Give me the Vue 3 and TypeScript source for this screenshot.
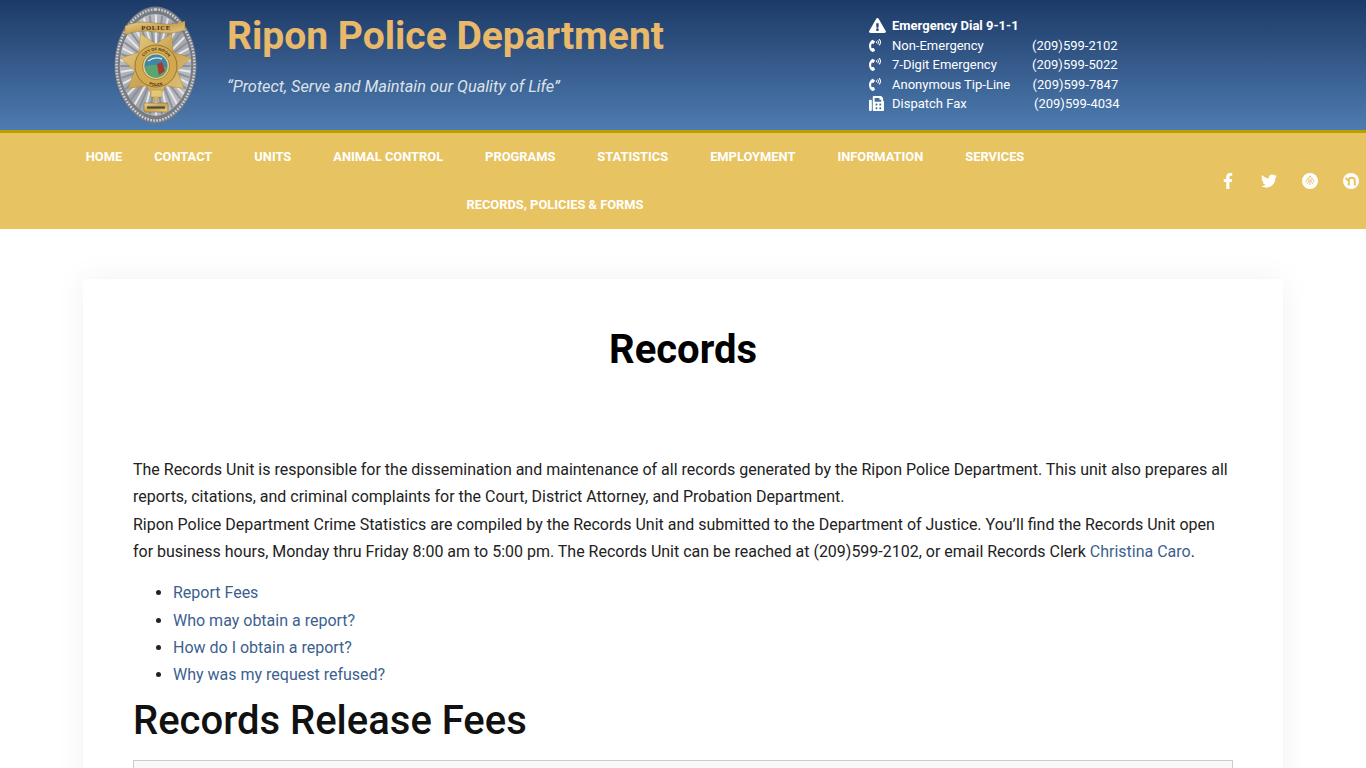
<script setup lang="ts">
const phone = 'M97.333 506.966c-129.874-129.874-129.681-340.252 0-469.933 5.698-5.698 14.527-6.632 21.263-2.422l64.817 40.513a17.187 17.187 0 0 1 6.849 20.958l-32.408 81.021a17.188 17.188 0 0 1-17.669 10.719l-55.81-5.58c-21.051 58.261-20.612 122.471 0 179.515l55.811-5.581a17.188 17.188 0 0 1 17.669 10.719l32.408 81.022a17.188 17.188 0 0 1-6.849 20.958l-64.817 40.513a17.19 17.19 0 0 1-21.264-2.422zM247.126 95.473c11.832 20.047 11.832 45.008 0 65.055-3.95 6.693-13.108 7.959-18.718 2.581l-5.975-5.726c-3.911-3.748-4.793-9.622-2.261-14.41a32.063 32.063 0 0 0 0-29.945c-2.533-4.788-1.65-10.662 2.261-14.41l5.975-5.726c5.61-5.378 14.768-4.112 18.718 2.581zm91.787-91.187c60.14 71.604 60.092 175.882 0 247.428-4.474 5.327-12.53 5.746-17.552.933l-5.798-5.557c-4.56-4.371-4.977-11.529-.93-16.379 49.687-59.538 49.646-145.933 0-205.422-4.047-4.85-3.631-12.008.93-16.379l5.798-5.557c5.022-4.813 13.078-4.394 17.552.933zm-45.972 44.941c36.05 46.322 36.108 111.149 0 157.546-4.39 5.641-12.697 6.251-17.856 1.304l-5.818-5.579c-4.4-4.219-4.998-11.095-1.285-15.931 26.536-34.564 26.534-82.572 0-117.134-3.713-4.836-3.115-11.711 1.285-15.931l5.818-5.579c5.159-4.947 13.466-4.337 17.856 1.304z'
const fax = 'M480 160V77.25a32 32 0 0 0-9.38-22.63L425.37 9.37A32 32 0 0 0 402.75 0H160a32 32 0 0 0-32 32v448a32 32 0 0 0 32 32h320a32 32 0 0 0 32-32V192a32 32 0 0 0-32-32zM288 432a16 16 0 0 1-16 16h-32a16 16 0 0 1-16-16v-32a16 16 0 0 1 16-16h32a16 16 0 0 1 16 16zm0-128a16 16 0 0 1-16 16h-32a16 16 0 0 1-16-16v-32a16 16 0 0 1 16-16h32a16 16 0 0 1 16 16zm128 128a16 16 0 0 1-16 16h-32a16 16 0 0 1-16-16v-32a16 16 0 0 1 16-16h32a16 16 0 0 1 16 16zm0-128a16 16 0 0 1-16 16h-32a16 16 0 0 1-16-16v-32a16 16 0 0 1 16-16h32a16 16 0 0 1 16 16zm0-112H192V64h160v48a16 16 0 0 0 16 16h48zM64 128H32a32 32 0 0 0-32 32v320a32 32 0 0 0 32 32h32a32 32 0 0 0 32-32V160a32 32 0 0 0-32-32z'

const contacts = [
  { label: 'Non-Emergency', num: '(209)599-2102', icon: phone, vb: '0 0 384 512', shift: 0 },
  { label: '7-Digit Emergency', num: '(209)599-5022', icon: phone, vb: '0 0 384 512', shift: 0 },
  { label: 'Anonymous Tip-Line', num: '(209)599-7847', icon: phone, vb: '0 0 384 512', shift: 0.6 },
  { label: 'Dispatch Fax', num: '(209)599-4034', icon: fax, vb: '0 0 512 512', shift: 2 },
]

const menu = [
  { label: 'HOME', sub: false },
  { label: 'CONTACT', sub: true },
  { label: 'UNITS', sub: true },
  { label: 'ANIMAL CONTROL', sub: true },
  { label: 'PROGRAMS', sub: true },
  { label: 'STATISTICS', sub: true },
  { label: 'EMPLOYMENT', sub: true },
  { label: 'INFORMATION', sub: true },
  { label: 'SERVICES', sub: true },
  { label: 'RECORDS, POLICIES & FORMS', sub: true },
]

const links = ['Report Fees', 'Who may obtain a report?', 'How do I obtain a report?', 'Why was my request refused?']

const eggPath = 'M41.5 0.5 C21 0.5 0.5 26 0.5 60 C0.5 91 22 117.5 41.5 117.5 C61 117.5 82.5 91 82.5 60 C82.5 26 62 0.5 41.5 0.5 Z'

// silver sunburst behind the star on the badge
const rays = Array.from({ length: 44 }, (_, i) => {
  const a = ((i * 360) / 44) * (Math.PI / 180)
  return {
    x: 42 + Math.cos(a) * 60,
    y: 60 + Math.sin(a) * 70,
    dark: i % 2 === 0,
  }
})

// seven points, one of them straight down
const starPoints = Array.from({ length: 14 }, (_, i) => {
  const a = ((i * 360) / 14 + 90) * (Math.PI / 180)
  const r = i % 2 === 0 ? 36 : 22
  return `${(42 + Math.cos(a) * r).toFixed(1)},${(60 + Math.sin(a) * r).toFixed(1)}`
}).join(' ')
</script>

<template>
  <div class="page">
    <header class="top">
      <svg class="badge" viewBox="0 0 83 118" role="img" aria-label="Ripon Police badge">
        <defs>
          <linearGradient id="gold" x1="0" y1="0" x2="1" y2="1">
            <stop offset="0" stop-color="#ecd38f" />
            <stop offset="0.5" stop-color="#c9a253" />
            <stop offset="1" stop-color="#e8cd88" />
          </linearGradient>
          <linearGradient id="silver" x1="0" y1="0" x2="1" y2="1">
            <stop offset="0" stop-color="#cfd1d5" />
            <stop offset="0.5" stop-color="#9fa2a8" />
            <stop offset="1" stop-color="#c8cace" />
          </linearGradient>
          <clipPath id="egg-in">
            <path :d="eggPath" transform="translate(41.5 59) scale(0.86) translate(-41.5 -59)" />
          </clipPath>
          <path id="seal-top" d="M26.5 60 A15.5 15.5 0 0 1 57.5 60" />
          <path id="seal-bot" d="M24 62 A18 18 0 0 0 60 62" />
        </defs>
        <path :d="eggPath" fill="#777b83" />
        <path :d="eggPath" fill="none" stroke="#cfd0d4" stroke-width="2.6" stroke-dasharray="1.8 1.4" transform="translate(41.5 59) scale(0.95) translate(-41.5 -59)" />
        <path :d="eggPath" fill="url(#silver)" transform="translate(41.5 59) scale(0.87) translate(-41.5 -59)" />
        <g clip-path="url(#egg-in)">
          <line
            v-for="(r, i) in rays"
            :key="i"
            x1="42"
            y1="60"
            :x2="r.x"
            :y2="r.y"
            :stroke="r.dark ? '#8d9097' : '#e6e7ea'"
            stroke-width="2"
          />
        </g>
        <path d="M11 20 Q25 14 41 17 Q58 20 71 15 L71 24 Q58 29 41 26 Q25 23 11 29 Z" fill="url(#gold)" stroke="#8b6a22" stroke-width="0.4" />
        <text x="42" y="24.4" class="badge-txt" text-anchor="middle">POLICE</text>
        <polygon :points="starPoints" fill="url(#gold)" stroke="#a8842f" stroke-width="0.5" />
        <circle cx="42" cy="60" r="21" fill="#d2a94f" stroke="#6f5419" stroke-width="0.6" />
        <text class="seal-txt"><textPath href="#seal-top" startOffset="50%" text-anchor="middle">CITY OF RIPON</textPath></text>
        <text class="seal-txt"><textPath href="#seal-bot" startOffset="50%" text-anchor="middle">POLICE</textPath></text>
        <circle cx="42" cy="60" r="13.5" fill="#e9cf85" stroke="#6f5419" stroke-width="0.5" />
        <circle cx="42" cy="60" r="11.5" fill="#3f86ad" />
        <path d="M30.6 61 Q41 56 53.4 62 Q51 71 42 71.5 Q33 71 30.6 61 Z" fill="#5aa56f" />
        <path d="M43 58 L48 56 L51 65 L45 69 Z" fill="#a73a30" />
        <path d="M34 55 Q41 50 48 53" fill="none" stroke="#f2e6b8" stroke-width="1.4" />
        <rect x="37" y="84" width="11" height="7" fill="#e5c777" stroke="#8b6a22" stroke-width="0.3" />
        <rect x="30" y="97" width="24" height="9" rx="0.8" fill="url(#gold)" stroke="#6f5419" stroke-width="0.5" />
        <rect x="33" y="100.4" width="18" height="2.2" fill="#4f4a3c" />
      </svg>
      <div class="brand">
        <div class="title">Ripon Police Department</div>
        <div class="tagline">“Protect, Serve and Maintain our Quality of Life”</div>
      </div>
      <div class="contacts">
        <div class="row strong">
          <span class="ico-box"><svg class="ico warn" viewBox="0 0 576 512" preserveAspectRatio="xMinYMid"><path d="M569.517 440.013C587.975 472.007 564.806 512 527.94 512H48.054c-36.937 0-59.999-40.055-41.577-71.987L246.423 23.985c18.467-32.009 64.72-31.951 83.154 0l239.94 416.028zM288 354c-25.405 0-46 20.595-46 46s20.595 46 46 46 46-20.595 46-46-20.595-46-46-46zm-43.673-165.346l7.418 136c.347 6.364 5.609 11.346 11.982 11.346h48.546c6.373 0 11.635-4.982 11.982-11.346l7.418-136c.375-6.874-5.098-12.654-11.982-12.654h-63.383c-6.884 0-12.356 5.78-11.981 12.654z" /></svg></span>
          <span>Emergency Dial 9-1-1</span>
        </div>
        <div v-for="c in contacts" :key="c.label" class="row">
          <span class="ico-box"><svg class="ico" :class="{ squat: c.icon === phone }" :viewBox="c.vb" :preserveAspectRatio="c.icon === phone ? 'none' : 'xMinYMid'"><path :d="c.icon" /></svg></span>
          <span class="lbl">{{ c.label }}</span>
          <span class="num" :style="{ marginLeft: c.shift + 'px' }">{{ c.num }}</span>
        </div>
      </div>
    </header>

    <nav class="nav">
      <ul class="menu">
        <li v-for="m in menu" :key="m.label" :class="{ sub: m.sub }">{{ m.label }}</li>
      </ul>
      <div class="social">
        <svg class="soc" viewBox="0 0 320 512"><path d="M279.14 288l14.22-92.66h-88.91v-60.13c0-25.35 12.42-50.06 52.24-50.06h40.42V6.26S260.43 0 225.36 0c-73.22 0-121.08 44.38-121.08 124.72v70.62H22.89V288h81.39v224h100.17V288z" /></svg>
        <svg class="soc" viewBox="0 0 512 512"><path d="M459.37 151.716c.325 4.548.325 9.097.325 13.645 0 138.72-105.583 298.558-298.558 298.558-59.452 0-114.68-17.219-161.137-47.106 8.447.974 16.568 1.299 25.34 1.299 49.055 0 94.213-16.568 130.274-44.832-46.132-.975-84.792-31.188-98.112-72.772 6.498.974 12.995 1.624 19.818 1.624 9.421 0 18.843-1.3 27.614-3.573-48.081-9.747-84.143-51.98-84.143-102.985v-1.299c13.969 7.797 30.214 12.67 47.431 13.319-28.264-18.843-46.781-51.005-46.781-87.391 0-19.492 5.197-37.36 14.294-52.954 51.655 63.675 129.3 105.258 216.365 109.807-1.624-7.797-2.599-15.918-2.599-24.04 0-57.828 46.782-104.934 104.934-104.934 30.213 0 57.502 12.67 76.67 33.137 23.715-4.548 46.456-13.32 66.599-25.34-7.798 24.366-24.366 44.833-46.132 57.827 21.117-2.273 41.584-8.122 60.426-16.243-14.292 20.791-32.161 39.308-52.628 54.253z" /></svg>
        <svg class="soc" viewBox="0 0 16 16">
          <circle cx="8" cy="8" r="8" />
          <path d="M3.4 9.2 L6 5.2 L8 8 L10 5.2 L12.6 9.2 M5 11.2 L7 7.4 M11 11.2 L9 7.4 M8 2.8 L6.6 5 M8 2.8 L9.4 5 M8 8 V12" stroke="#e3c06a" stroke-width="0.9" fill="none" />
        </svg>
        <svg class="soc" viewBox="0 0 16 16">
          <circle cx="8" cy="8" r="8" />
          <path d="M3 4.6 C3.3 6.5 4.4 7.2 5.8 7.2 M5.8 12.4 V7.2 C5.8 5.7 7.2 4.8 8.8 4.8 C10.6 4.8 11.8 5.8 11.8 7.6 V12.4" stroke="#e7c362" stroke-width="2" fill="none" />
        </svg>
      </div>
    </nav>

    <main class="wrap">
      <article class="card">
        <h1>Records</h1>
        <p>The Records Unit is responsible for the dissemination and maintenance of all records generated by the Ripon Police Department. This unit also prepares all reports, citations, and criminal complaints for the Court, District Attorney, and Probation Department.</p>
        <p>Ripon Police Department Crime Statistics are compiled by the Records Unit and submitted to the Department of Justice. You’ll find the Records Unit open for business hours, Monday thru Friday 8:00 am to 5:00 pm. The Records Unit can be reached at (209)599-2102, or email Records Clerk <a href="#">Christina Caro</a>.</p>
        <ul class="links">
          <li v-for="l in links" :key="l"><a href="#">{{ l }}</a></li>
        </ul>
        <h2>Records Release Fees</h2>
        <div class="table"></div>
      </article>
    </main>
  </div>
</template>

<style>
html, body { margin: 0; overflow: hidden; }
</style>

<style scoped>
.page {
  height: 768px;
  overflow: hidden;
  background: #fff;
  font-family: Roboto, "Liberation Sans", sans-serif;
  color: #222;
}

.top {
  height: 130px;
  display: flex;
  background: linear-gradient(180deg, #1d3a67 0%, #4e7bb0 100%);
  border-bottom: 3px solid #b9a000;
}
.badge {
  width: 83px;
  height: 118px;
  margin: 6px 0 0 114px;
  flex: none;
}
.badge-txt {
  font-family: "Liberation Serif", serif;
  font-size: 6.6px;
  font-weight: 700;
  letter-spacing: 0.7px;
  fill: #3d2f10;
}
.seal-txt {
  font-family: "Liberation Sans", sans-serif;
  font-size: 3.9px;
  font-weight: 700;
  fill: #3d2f10;
}
.brand {
  margin-left: 30px;
  width: 642px;
  flex: none;
}
.title {
  margin-top: 13px;
  font-size: 39px;
  line-height: 46px;
  font-weight: 700;
  color: #e8b96b;
}
.tagline {
  margin-top: 17px;
  font-size: 16.32px;
  line-height: 22px;
  font-style: italic;
  color: #dde2e8;
}
.contacts {
  padding-top: 16px;
  font-size: 13px;
  color: #fff;
}
.row {
  display: flex;
  align-items: center;
  height: 19.5px;
}
.strong { font-weight: 700; }
.ico {
  height: 15px;
  width: 16px;
  fill: #fff;
  display: block;
}
.ico.squat { width: 12px; height: 13px; }
.warn { width: 18px; }
.ico-box { width: 23px; flex: none; }
.lbl { width: 140px; flex: none; }

.nav {
  height: 96px;
  display: flex;
  background: #e7c362;
}
.menu {
  width: 1120px;
  flex: none;
  margin: 0;
  padding: 0;
  list-style: none;
  display: flex;
  flex-wrap: wrap;
  justify-content: center;
  align-content: flex-start;
}
.menu li {
  padding: 0 16px;
  height: 48px;
  line-height: 47px;
  font-size: 12.86px;
  font-weight: 700;
  color: #fff;
}
.menu li.sub { padding-right: 26px; }
.social {
  display: flex;
  align-items: center;
  padding-left: 100px;
  gap: 25px;
}
.soc {
  width: 16px;
  height: 16px;
  fill: #fff;
  flex: none;
}

.wrap {
  padding: 50px 83px 0;
}
.card {
  padding: 51px 50px 50px;
  background: #fff;
  box-shadow: 0 0 30px rgba(0, 0, 0, 0.06);
}
h1 {
  margin: 0 0 86px;
  font-size: 40px;
  line-height: 40px;
  font-weight: 700;
  text-align: center;
  color: #000;
}
p {
  margin: 0;
  font-size: 15.99px;
  line-height: 27.4px;
}
a {
  color: #3c5f8f;
  text-decoration: none;
}
.links {
  margin: 13.6px 0 0;
  padding: 0 0 0 40px;
  font-size: 16px;
  line-height: 27.4px;
}
h2 {
  margin: 8.4px 0 15px;
  font-size: 40px;
  line-height: 48px;
  font-weight: 500;
  color: #111;
}
.table {
  height: 200px;
  border: 1px solid #ccc;
  background: #f9f9f9;
}
</style>
